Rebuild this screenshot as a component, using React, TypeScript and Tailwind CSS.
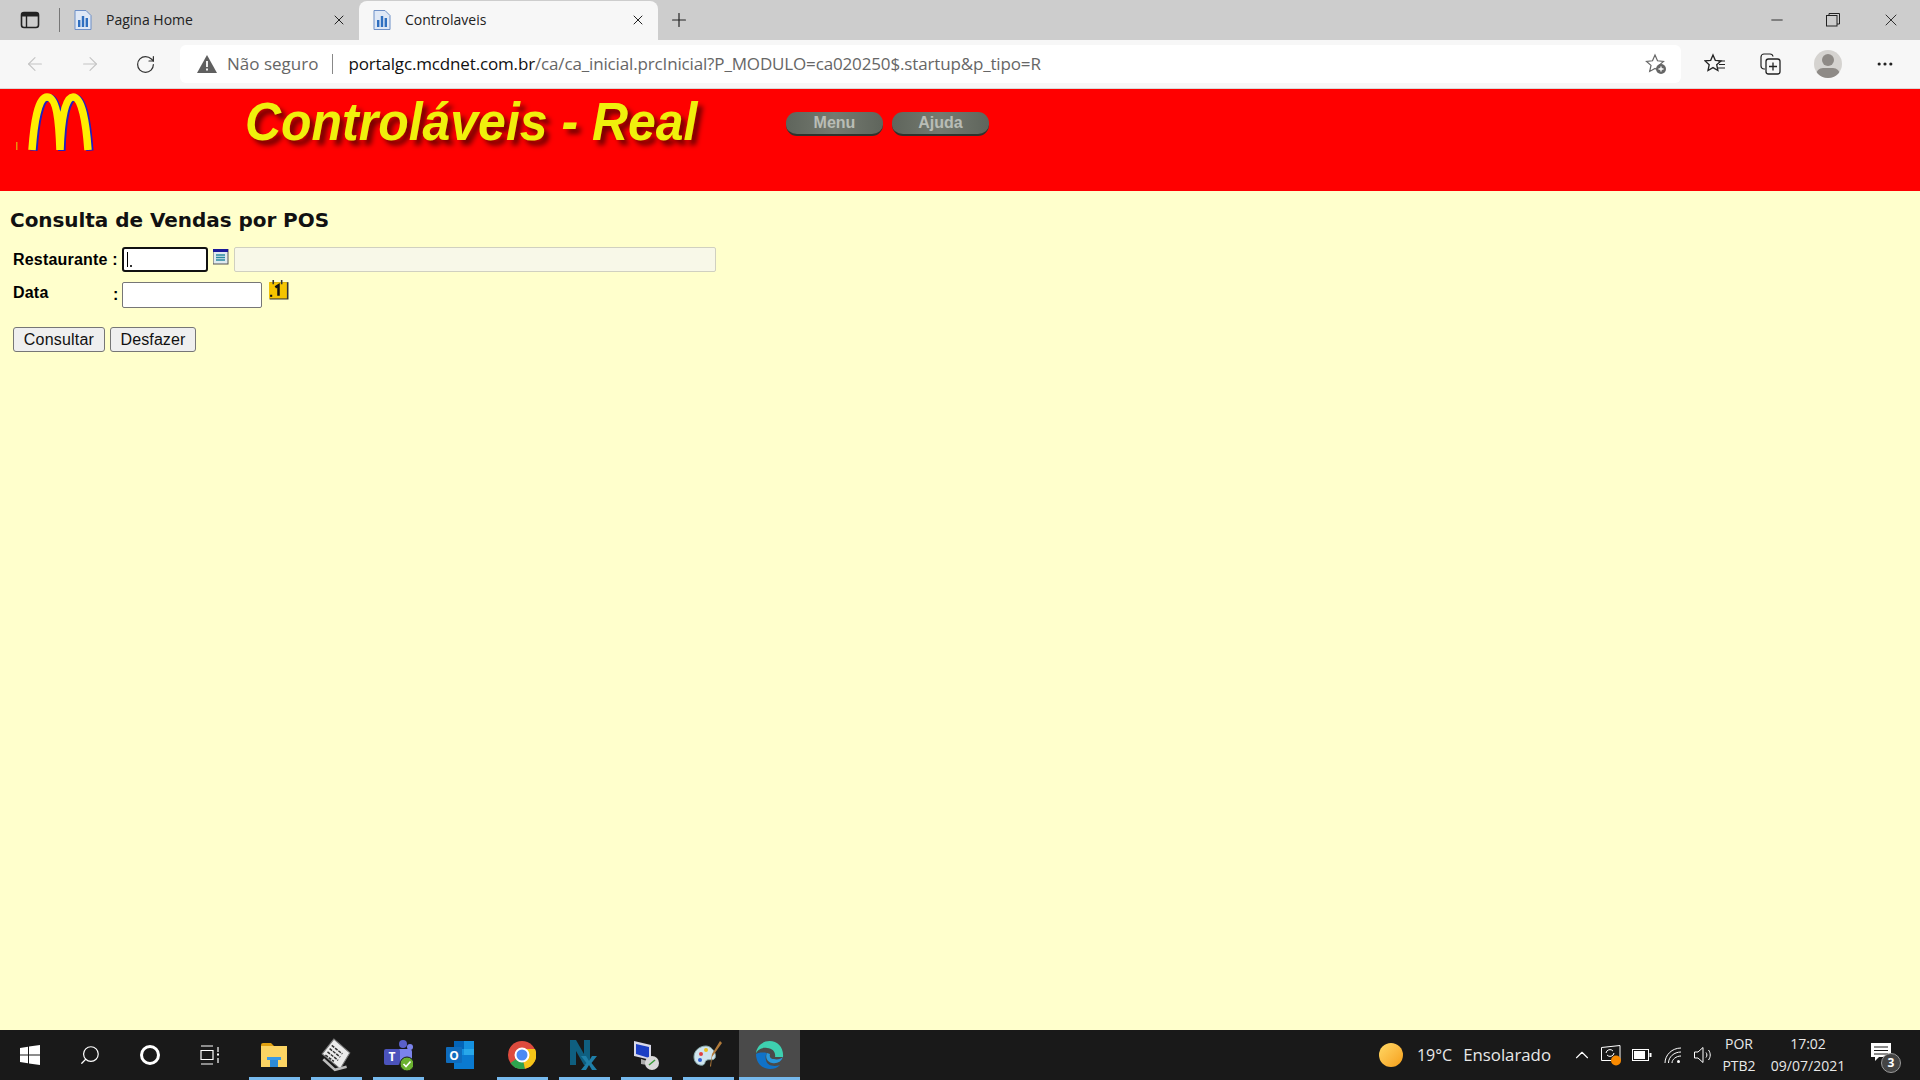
import React from 'react';
import { ArrowLeft, ArrowRight, RotateCw, X, Plus, Minus, ChevronUp, Search, MoreHorizontal } from 'lucide-react';

const ui = { fontFamily: '"Open Sans", "Noto Sans", sans-serif' };

function PageIcon() {
  return (
    <svg width="18" height="20" viewBox="0 0 18 20">
      <path d="M1 .5h11l5 5v14H1z" fill="#dfe8f6" stroke="#6d8fc7" />
      <rect x="4" y="10" width="2.4" height="7" fill="#2f6fc0" />
      <rect x="7.8" y="6" width="2.4" height="11" fill="#2f6fc0" />
      <rect x="11.6" y="8" width="2.4" height="9" fill="#2f6fc0" />
    </svg>
  );
}

function Tab({ title, active }: { title: string; active?: boolean }) {
  return (
    <div className={'flex h-[39px] w-[299px] items-center pl-[14px] pr-[12px] ' + (active ? 'mt-0 rounded-t-lg bg-[#f7f7f7]' : '')}>
      <PageIcon />
      <span className="mb-[2px] ml-[14px] flex-1 text-[14px] text-[#222]">{title}</span>
      <X size={16} strokeWidth={1.5} className="text-[#222]" />
    </div>
  );
}

function TabStrip() {
  return (
    <div className="flex h-[40px] items-center bg-[#cdcdcd]">
      <svg width="20" height="20" viewBox="0 0 20 20" className="ml-[20px]">
        <rect x="1.5" y="2.5" width="17" height="15" rx="2.5" fill="none" stroke="#222" strokeWidth="1.6" />
        <path d="M2 3h16v3.5H2z" fill="#222" />
        <path d="M6.5 6v11" stroke="#222" strokeWidth="1.4" />
      </svg>
      <div className="ml-[19px] h-[24px] w-px bg-[#777]" />
      <Tab title="Pagina Home" />
      <Tab title="Controlaveis" active />
      <Plus size={22} strokeWidth={1.3} className="ml-[10px] text-[#222]" />
      <div className="flex-1" />
      <Minus size={18} strokeWidth={1.2} className="mr-[-1px] text-[#222]" />
      <svg width="14" height="14" viewBox="0 0 14 14" className="ml-[41px]">
        <rect x=".5" y="2.5" width="10.5" height="10.5" fill="none" stroke="#222" />
        <path d="M3 2.5V.5h10.5V11h-2.5" fill="none" stroke="#222" />
      </svg>
      <X size={20} strokeWidth={1.1} className="ml-[41px] mr-[19px] text-[#222]" />
    </div>
  );
}

function ToolBar() {
  return (
    <div className="flex h-[49px] items-center border-b border-[#d8d8d8] bg-[#f7f7f7]">
      <ArrowLeft size={22} strokeWidth={1.2} className="ml-[24px] text-[#c4c4c4]" />
      <ArrowRight size={22} strokeWidth={1.2} className="ml-[33px] text-[#c4c4c4]" />
      <RotateCw size={21} strokeWidth={1.4} className="ml-[34px] text-[#333]" />
      <div className="ml-[24px] flex h-[38px] w-[1501px] items-center rounded-md bg-white">
        <svg width="22" height="20" viewBox="0 0 22 20" className="ml-[16px]">
          <path d="M11 1l10 18H1z" fill="#5f5f5f" />
          <path d="M11 7v6M11 14.5v2" stroke="#fff" strokeWidth="1.8" />
        </svg>
        <span className="ml-[9px] text-[17px] text-[#666]">Não seguro</span>
        <div className="ml-[14px] h-[20px] w-px bg-[#888]" />
        <span className="ml-[15px] text-[17px] tracking-[-0.15px] text-[#666]">
          <span className="text-[#111]">portalgc.mcdnet.com.br</span>/ca/ca_inicial.prcInicial?P_MODULO=ca020250$.startup&amp;p_tipo=R
        </span>
        <div className="flex-1" />
        <svg width="22" height="22" viewBox="0 0 22 22" className="mr-[14px]">
          <path d="M10 2l2.500 5.800 6 .6-4.500 4 1.300 6L10 15.400 4.700 18.400l1.300-6-4.500-4 6-.6z" fill="none" stroke="#666" strokeWidth="1.2" />
          <circle cx="16" cy="16" r="5" fill="#666" />
          <path d="M16 13.500v5M13.500 16h5" stroke="#fff" strokeWidth="1.3" />
        </svg>
      </div>
      <svg width="22" height="22" viewBox="0 0 22 22" className="ml-[23px]">
        <path d="M9 2l2.300 5.300 5.700.6-4.300 3.800 1.200 5.800L9 14.600 4 17.500l1.200-5.800L1 7.900l5.700-.6z" fill="none" stroke="#222" strokeWidth="1.3" />
        <path d="M14 8h7M15 11.500h6M14 15h7" stroke="#222" strokeWidth="1.2" />
      </svg>
      <svg width="22" height="22" viewBox="0 0 22 22" className="ml-[33px]">
        <path d="M6 16H5a3 3 0 0 1-3-3V4a3 3 0 0 1 3-3h6a3 3 0 0 1 3 2.500" fill="none" stroke="#222" strokeWidth="1.2" />
        <rect x="7" y="6" width="14" height="15" rx="2.500" fill="none" stroke="#222" strokeWidth="1.3" />
        <path d="M14 9.500v8M10 13.500h8" stroke="#222" strokeWidth="1.3" />
      </svg>
      <div className="relative ml-[33px] h-[28px] w-[28px] overflow-hidden rounded-full bg-[#d5d3d0]">
        <div className="mx-auto mt-[4px] h-[12px] w-[12px] rounded-full bg-[#8e8a86]" />
        <div className="mx-auto mt-[2px] h-[14px] w-[24px] rounded-full bg-[#8e8a86]" />
      </div>
      <MoreHorizontal size={20} strokeWidth={1.8} className="ml-[33px] text-[#222]" />
    </div>
  );
}

function Logo() {
  return (
    <svg width="89" height="64" viewBox="0 0 89 64" className="mt-[3px]">
      <rect x="2" y="50" width="1.500" height="8" fill="#e8900a" />
      <g transform="translate(15 1)" fill="none" strokeWidth="7.500" strokeLinejoin="round">
        <path transform="translate(1.800 .8)" d="M3 57C5 30 9 4 18 4c9 0 12 22 13 53M31 57C32 26 36 4 44 4c9 0 13 26 15 53" stroke="#2020c0" />
        <path d="M3 57C5 30 9 4 18 4c9 0 12 22 13 53M31 57C32 26 36 4 44 4c9 0 13 26 15 53" stroke="#ffee00" />
      </g>
    </svg>
  );
}

function PillButton({ label }: { label: string }) {
  return (
    <div className="flex h-[24px] w-[97px] items-center justify-center rounded-[11px] border-b-2 border-[#2f332d] bg-gradient-to-r from-[#5f655c] via-[#747a70] to-[#5f655c] text-[16px] font-bold text-[#b9bdb6]" style={{ fontFamily: '"Liberation Sans", sans-serif' }}>
      {label}
    </div>
  );
}

function Banner() {
  return (
    <div className="flex h-[102px] items-start bg-[#ff0000]">
      <div className="ml-[14px]"><Logo /></div>
      <div className="ml-[142px] mt-[1px] w-[452px] origin-left scale-x-[0.925] whitespace-nowrap text-[54px] font-bold italic leading-[62px] text-[#f0f00c] [text-shadow:5px_5px_5px_#700000]" style={{ fontFamily: '"Liberation Sans", sans-serif' }}>
        Controláveis - Real
      </div>
      <div className="ml-[89px] mt-[23px] flex gap-[9px]">
        <PillButton label="Menu" />
        <PillButton label="Ajuda" />
      </div>
    </div>
  );
}

function ListIcon() {
  return (
    <svg width="16" height="16" viewBox="0 0 16 16" className="ml-[5px] mt-[-6px]">
      <rect width="15" height="15" fill="#dfeaf0" stroke="#555" />
      <rect width="15" height="3" fill="#1a1a9a" />
      <path d="M3 6h9M3 8.500h9M3 11h9" stroke="#2a8aa0" strokeWidth="1.3" />
    </svg>
  );
}

function CalendarIcon() {
  return (
    <svg width="21" height="21" viewBox="0 0 20 20" className="ml-[6px] mt-[-11px]">
      <rect x="1.500" y="3" width="18" height="16.500" fill="#333" />
      <rect x="1" y="3" width="17" height="15.500" fill="#f5c400" />
      <path d="M5 1v4M13 1v4" stroke="#333" strokeWidth="1.5" />
      <path d="M7 8l3-2v10" fill="none" stroke="#111" strokeWidth="2.400" />
      <rect x="2" y="15" width="2" height="2" fill="#111" />
    </svg>
  );
}

function Form() {
  return (
    <div className="flex-1 bg-[#ffffcc] pt-[17px]" style={{ fontFamily: '"Liberation Sans", sans-serif' }}>
      <h1 className="ml-[10px] text-[20px] font-bold leading-[24px] tracking-[-0.05px] text-[#111]" style={{ fontFamily: '"DejaVu Sans", sans-serif' }}>
        Consulta de Vendas por POS
      </h1>
      <div className="ml-[13px] mt-[15px] flex items-center">
        <span className="w-[109px] text-[16px] font-bold tracking-[0.2px]">Restaurante :</span>
        <div className="flex h-[25px] w-[86px] items-center rounded-[3px] border-2 border-[#111] bg-white pl-[3px]">
          <div className="h-[15px] w-px bg-black" />
          <div className="ml-[2px] mt-[13px] h-[2px] w-[2px] bg-[#333]" />
        </div>
        <ListIcon />
        <div className="ml-[5px] h-[25px] w-[482px] rounded-[2px] border border-[#d0d0c0] bg-[#f8f8e8]" />
      </div>
      <div className="ml-[13px] mt-[10px] flex items-center">
        <span className="mb-[5px] w-[100px] text-[16px] font-bold leading-[16px] tracking-[0.2px]">Data</span>
        <span className="w-[9px] text-[16px] font-bold leading-[16px]">:</span>
        <div className="h-[26px] w-[140px] rounded-[2px] border border-[#767676] bg-white" />
        <CalendarIcon />
      </div>
      <div className="ml-[13px] mt-[19px] flex gap-[5px]">
        <button className="h-[25px] w-[92px] rounded-[3px] border border-[#767676] bg-[#efefef] text-[16px] tracking-[0.2px] text-[#111]">Consultar</button>
        <button className="h-[25px] w-[86px] rounded-[3px] border border-[#767676] bg-[#efefef] text-[16px] tracking-[0.1px] text-[#111]">Desfazer</button>
      </div>
    </div>
  );
}

function TaskItem({ children }: { children: React.ReactNode }) {
  return <div className="flex h-[50px] w-[60px] items-center justify-center">{children}</div>;
}

function RunningItem({ children, bare }: { children: React.ReactNode; bare?: boolean }) {
  return (
    <div className="relative flex h-[50px] w-[62px] items-center justify-center">
      {children}
      {!bare && <div className="absolute bottom-0 left-[6px] h-[3px] w-[51px] bg-[#76b9ed]" />}
    </div>
  );
}

function TaskBar() {
  return (
    <div className="flex h-[50px] items-center bg-[#191919] text-white" style={ui}>
      <TaskItem>
        <svg width="20" height="20" viewBox="0 0 20 20" fill="#fff">
          <path d="M0 3l8-1.200V9.500H0zM9 1.600L20 0v9.500H9zM0 10.500h8v7.700L0 17zM9 10.500h11V20L9 18.400z" />
        </svg>
      </TaskItem>
      <TaskItem><Search size={22} strokeWidth={1.3} className="-scale-x-100" /></TaskItem>
      <TaskItem><div className="h-[20px] w-[20px] rounded-full border-[3px] border-white" /></TaskItem>
      <TaskItem>
        <svg width="20" height="20" viewBox="0 0 20 20" fill="none" stroke="#fff" strokeWidth="1.2">
          <path d="M1 1h12M1 19h12M1 5.500h12v9H1zM18 2v5M18 13v5" />
          <rect x="17" y="8.500" width="2" height="2" fill="#fff" stroke="none" />
        </svg>
      </TaskItem>
      <div className="w-[3px]" />
      <RunningItem>
        <svg width="28" height="26" viewBox="0 0 28 26">
          <path d="M1 3a2 2 0 0 1 2-2h8l3 3H1z" fill="#e0a010" />
          <rect x="1" y="4" width="26" height="21" fill="#fcd463" />
          <path d="M10 25v-7h8v7z" fill="#2d8ad6" />
          <rect x="7" y="15" width="14" height="3" fill="#3a9ae6" />
        </svg>
      </RunningItem>
      <RunningItem>
        <svg width="32" height="34" viewBox="0 0 30 32">
          <path d="M2 15L13 1l15 13-9 15z" fill="#ececec" stroke="#777" />
          <path d="M11 7l10 8M9 10l10 8M7 13l10 8M5 16l8 6" stroke="#333" strokeWidth="1.4" strokeDasharray="3 1" />
          <path d="M3 20l11 10 11-3" fill="none" stroke="#bbb" strokeWidth="2.500" />
        </svg>
      </RunningItem>
      <RunningItem>
        <svg width="30" height="32" viewBox="0 0 30 32">
          <circle cx="20" cy="5" r="4" fill="#5a5fc8" />
          <circle cx="27" cy="8" r="3" fill="#7b83eb" />
          <rect x="14" y="10" width="15" height="14" rx="3" fill="#7b83eb" />
          <rect x="1" y="10" width="16" height="16" rx="2" fill="#4b53bc" />
          <text x="9" y="22" textAnchor="middle" fontSize="12" fontWeight="700" fill="#fff">T</text>
          <circle cx="24" cy="25" r="7" fill="#6bb130" stroke="#191919" />
          <path d="M20.500 25l2.500 2.500 4.500-5" fill="none" stroke="#fff" strokeWidth="1.6" />
        </svg>
      </RunningItem>
      <RunningItem bare>
        <svg width="30" height="30" viewBox="0 0 30 30">
          <rect x="9" y="1" width="20" height="26" fill="#1490df" />
          <rect x="9" y="1" width="10" height="8" fill="#0364b8" />
          <rect x="19" y="9" width="10" height="9" fill="#28a8ea" />
          <path d="M9 15l20 0v14H9z" fill="#0a7ad0" />
          <rect x="1" y="7" width="16" height="16" rx="1" fill="#0f6cbd" />
          <text x="9" y="19.500" textAnchor="middle" fontSize="12" fontWeight="700" fill="#fff">O</text>
        </svg>
      </RunningItem>
      <RunningItem>
        <svg width="28" height="28" viewBox="0 0 28 28">
          <circle cx="14" cy="14" r="14" fill="#dd4b3e" />
          <path d="M14 14L2.500 22A14 14 0 0 0 17 27.700z" fill="#2da44e" />
          <path d="M14 14l3 13.700A14 14 0 0 0 27 8H14z" fill="#f5c518" />
          <circle cx="14" cy="14" r="6.500" fill="#4a8af4" stroke="#fff" strokeWidth="2" />
        </svg>
      </RunningItem>
      <RunningItem>
        <svg width="30" height="34" viewBox="0 0 30 32">
          <path d="M1 1h6l8 14V1h6v25h-6L7 12v14H1z" fill="#0f5f80" />
          <path d="M12 17h5l3 5 3-5h5l-5.500 7 5.500 7h-5l-3-5-3 5h-5l5.500-7z" fill="#1f7fa8" />
        </svg>
      </RunningItem>
      <RunningItem>
        <svg width="30" height="32" viewBox="0 0 30 32">
          <path d="M3 2l17 4v15L3 17z" fill="#d8d8e8" />
          <path d="M5 5l13 3v11L5 15z" fill="#1c3fc4" />
          <path d="M10 20l6 2v4l-6-1z" fill="#aaa" />
          <circle cx="21" cy="24" r="7" fill="#d8d8d8" />
          <path d="M18 26l6-5" stroke="#3a9a3a" strokeWidth="1.5" />
        </svg>
      </RunningItem>
      <RunningItem>
        <svg width="30" height="30" viewBox="0 0 30 30">
          <path d="M13 6C6 6 1 11 1 17s5 9 9 8c3-1 1-4 4-5s6 1 8-2c2-4-3-12-9-12z" fill="#cfe4ee" stroke="#8aa" />
          <circle cx="8" cy="14" r="2" fill="#e04040" />
          <circle cx="13" cy="10" r="2" fill="#e8c020" />
          <circle cx="7" cy="20" r="2" fill="#3060d0" />
          <path d="M27 1l2 2-10 14-1 10-1-1 2-12z" fill="#b07a3a" />
        </svg>
      </RunningItem>
      <div className="relative flex h-[50px] w-[61px] items-center justify-center bg-[#4a4a4a]">
        <svg width="30" height="30" viewBox="0 0 30 30">
          <path d="M28 17C29 8 23 1 14.500 1 7 1 1 7 1 14c0-3 5-7 11-6 6 0 9 5 8 9z" fill="#3ed0b0" />
          <path d="M1 14c0 9 6 15 14 15 4 0 7-1 10-4-6 2-13 1-14-5-1-3 0-6 1-7-5-1-10 0-11 1z" fill="#1072c8" />
          <path d="M12 13c-2 4 0 9 5 10 5 1 9-1 11-6-2 2-6 3-9 2-3 0-5-2-4-5z" fill="#2a98dc" />
        </svg>
        <div className="absolute bottom-0 left-0 h-[3px] w-full bg-[#76b9ed]" />
      </div>
      <div className="flex-1" />
      <div className="h-[24px] w-[24px] rounded-full bg-gradient-to-br from-[#ffd964] to-[#f59e0b]" />
      <span className="ml-[14px] text-[16px] text-[#e8e8e8]">19°C</span>
      <span className="ml-[11px] text-[16.8px] text-[#e8e8e8]">Ensolarado</span>
      <ChevronUp size={22} strokeWidth={1.2} className="ml-[20px]" />
      <svg width="22" height="22" viewBox="0 0 22 22" className="ml-[7px]">
        <path d="M1.500 3.500L20 1.500v15H1.500z" fill="none" stroke="#fff" />
        <path d="M6 9a4 4 0 0 1 7-2M14 9a4 4 0 0 1-7 2" fill="none" stroke="#fff" />
        <circle cx="16" cy="16.500" r="5" fill="#f98a00" />
      </svg>
      <svg width="20" height="12" viewBox="0 0 20 12" className="ml-[10px]">
        <rect x=".5" y=".5" width="16" height="11" fill="none" stroke="#fff" />
        <rect x="2" y="2" width="11" height="8" fill="#fff" />
        <rect x="17.500" y="4" width="2" height="4" fill="#fff" />
      </svg>
      <svg width="18" height="18" viewBox="0 0 18 18" fill="none" stroke="#fff" className="ml-[12px]">
        <path d="M1 17C1 9 8 2 17 2M4.500 17c0-6 5.500-11 12.500-11M8 17c0-3.500 4-7 9-7" />
        <circle cx="14.500" cy="15.500" r="1.500" fill="#fff" stroke="none" />
      </svg>
      <svg width="20" height="20" viewBox="0 0 20 20" fill="none" stroke="#fff" className="ml-[11px]">
        <path d="M1.500 7h3.500l5-4.500v15L5 13H1.500z" />
        <path d="M13 7.500c1.200 1.500 1.200 3.500 0 5M15.500 5c2.300 3 2.300 7 0 10" />
      </svg>
      <div className="ml-[3px] flex w-[46px] flex-col items-center text-[14px] leading-[22px] text-[#e8e8e8]">
        <span>POR</span>
        <span>PTB2</span>
      </div>
      <div className="ml-[4px] flex w-[84px] flex-col items-center text-[14px] leading-[22px] text-[#e8e8e8]">
        <span>17:02</span>
        <span>09/07/2021</span>
      </div>
      <div className="relative ml-[21px] mr-[29px] h-[20px] w-[20px]">
        <svg width="20" height="18" viewBox="0 0 20 18" className="mt-[-2px]">
          <path d="M0 0h20v14H8l-4 4v-4H0z" fill="#fff" />
          <path d="M3 4h14M3 7.500h14M3 11h14" stroke="#191919" />
        </svg>
        <div className="absolute left-[10px] top-[8px] flex h-[20px] w-[20px] items-center justify-center rounded-full border border-[#999] bg-[#444] text-[12px] font-bold">3</div>
      </div>
    </div>
  );
}

export default function App() {
  return (
    <div className="flex h-[1080px] w-[1920px] flex-col overflow-hidden">
      <div style={ui}>
        <TabStrip />
        <ToolBar />
      </div>
      <Banner />
      <Form />
      <TaskBar />
    </div>
  );
}
